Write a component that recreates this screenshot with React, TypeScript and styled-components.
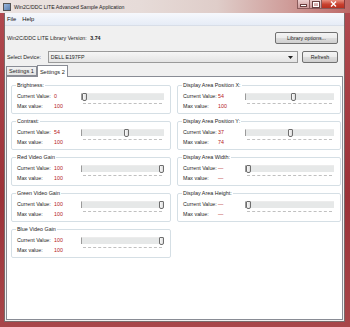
import styled, { createGlobalStyle } from 'styled-components'

const GlobalStyle = createGlobalStyle`
  html, body {
    margin: 0;
    padding: 0;
    background: #ffffff;
  }
  #root {
    width: 350px;
    height: 327px;
    overflow: hidden;
  }
`

type Control = {
  title: string
  current: string
  max: string
  pos: number
}

const leftControls: Control[] = [
  { title: 'Brightness:', current: '0', max: '100', pos: 0 },
  { title: 'Contrast:', current: '54', max: '100', pos: 54 },
  { title: 'Red Video Gain', current: '100', max: '100', pos: 100 },
  { title: 'Green Video Gain', current: '100', max: '100', pos: 100 },
  { title: 'Blue Video Gain', current: '100', max: '100', pos: 100 },
]

const rightControls: Control[] = [
  { title: 'Display Area Position X:', current: '54', max: '100', pos: 54 },
  { title: 'Display Area Position Y:', current: '37', max: '74', pos: 50 },
  { title: 'Display Area Width:', current: '—', max: '—', pos: 0 },
  { title: 'Display Area Height:', current: '—', max: '—', pos: 0 },
]

const GroupBox = ({ control, labelWidth, valueWidth }: { control: Control; labelWidth: number; valueWidth: number }) => (
  <Group>
    <GroupTitle>{control.title}</GroupTitle>
    <GroupGrid $labelWidth={labelWidth} $valueWidth={valueWidth}>
      <FieldLabel>Current Value:</FieldLabel>
      <FieldValue>{control.current}</FieldValue>
      <SliderBox>
        <Track>
          <Thumb style={{ left: `calc(${control.pos}% - ${control.pos * 0.05}px)` }} />
        </Track>
        <Ticks />
      </SliderBox>
      <FieldLabel>Max value:</FieldLabel>
      <FieldValue>{control.max}</FieldValue>
    </GroupGrid>
  </Group>
)

const App = () => {
  return (
    <>
      <GlobalStyle />
      <Window>
        <TitleBar>
          <TitleIcon />
          <TitleText>Win2C/DDC LITE Advanced Sample Application</TitleText>
          <Controls>
            <CaptionButton>
              <MinGlyph />
            </CaptionButton>
            <CaptionButton>
              <MaxGlyph />
            </CaptionButton>
            <CloseButton>
              <svg width="7" height="6" viewBox="0 0 7 6">
                <path d="M1 0.5 L6 5.5 M6 0.5 L1 5.5" stroke="#ffffff" strokeWidth="1.4" />
              </svg>
            </CloseButton>
          </Controls>
        </TitleBar>

        <Client>
          <MenuBar>
            <MenuItem>File</MenuItem>
            <MenuItem>Help</MenuItem>
          </MenuBar>

          <TopArea>
            <TopRow>
              <VersionText>
                Win2C/DDC LITE Library Version: <b>3.74</b>
              </VersionText>
              <PushButton $width={63}>Library options...</PushButton>
            </TopRow>
            <TopRow>
              <VersionText>Select Device:</VersionText>
              <Combo>
                <span>DELL E197FP</span>
                <svg width="5" height="3" viewBox="0 0 5 3">
                  <path d="M0 0 H5 L2.5 3 Z" fill="#222" />
                </svg>
              </Combo>
              <PushButton $width={36}>Refresh</PushButton>
            </TopRow>
          </TopArea>

          <TabArea>
            <TabStrip>
              <Tab>Settings 1</Tab>
              <Tab $active>Settings 2</Tab>
            </TabStrip>
            <TabPanel>
              <Column>
                {leftControls.map((c) => (
                  <GroupBox key={c.title} control={c} labelWidth={37} valueWidth={27} />
                ))}
              </Column>
              <Column>
                {rightControls.map((c) => (
                  <GroupBox key={c.title} control={c} labelWidth={35} valueWidth={27} />
                ))}
              </Column>
            </TabPanel>
          </TabArea>
        </Client>
      </Window>
    </>
  )
}

const Window = styled.div`
  width: 350px;
  height: 327px;
  box-sizing: border-box;
  display: flex;
  flex-flow: column;
  padding: 0 5px 5px 4px;
  background: linear-gradient(180deg, #b24a50 0%, #9c3238 60%, #a8464a 100%);
  font-family: 'Liberation Sans', Arial, sans-serif;
  font-size: 5.3px;
  color: #1e1e1e;
`

const TitleBar = styled.div`
  height: 13px;
  margin: 0 -5px 0 -4px;
  padding-left: 3px;
  display: flex;
  align-items: center;
  gap: 3px;
  background: linear-gradient(90deg, #ebe3e1 0%, #e6dbd8 40%, #dfcdc9 62%, #cf9d9a 82%, #bd6866 100%);
`

const TitleIcon = styled.div`
  width: 6px;
  height: 6px;
  border: 1px solid #555;
  background: linear-gradient(135deg, #9bb9e0, #5a7fae);
`

const TitleText = styled.div`
  flex: 1;
  font-size: 5.2px;
  color: #1a1a1a;
  white-space: nowrap;
`

const Controls = styled.div`
  align-self: flex-start;
  display: flex;
  margin-right: 5px;
`

const CaptionButton = styled.div`
  width: 12px;
  height: 9px;
  box-sizing: border-box;
  border: 1px solid #8a5a5a;
  border-top: none;
  border-right: none;
  background: linear-gradient(180deg, #ecd0d0, #cc9898);
  display: flex;
  align-items: center;
  justify-content: center;
`

const MinGlyph = styled.div`
  width: 5px;
  height: 1px;
  margin-top: 3px;
  background: #ffffff;
  border: 1px solid #6a4040;
`

const MaxGlyph = styled.div`
  width: 4px;
  height: 3px;
  border: 1px solid #ffffff;
  outline: 1px solid #6a4040;
`

const CloseButton = styled(CaptionButton)`
  width: 24px;
  border-right: 1px solid #8a3a3a;
  background: linear-gradient(180deg, #e89080, #c8402e 55%, #b83020);
`

const Client = styled.div`
  flex: 1;
  display: flex;
  flex-flow: column;
  background: #f0f0f0;
  border: 1px solid #7a6a6a;
  border-top: none;
  min-height: 0;
`

const MenuBar = styled.div`
  height: 12px;
  display: flex;
  align-items: center;
  gap: 6px;
  padding-left: 2px;
  background: linear-gradient(180deg, #f6f8fc, #e6ecf6);
  border-bottom: 1px solid #d8dee8;
  font-size: 5.8px;
`

const MenuItem = styled.span`
  color: #111;
`

const TopArea = styled.div`
  display: flex;
  flex-flow: column;
  gap: 7px;
  padding: 6px 6px 0 2px;
`

const TopRow = styled.div`
  height: 12px;
  display: flex;
  align-items: center;
  gap: 4px;

  & > :first-child {
    flex: 0 0 auto;
  }
`

const VersionText = styled.div`
  flex: 1;
  white-space: nowrap;

  b {
    font-weight: bold;
    margin-left: 2px;
  }
`

const PushButton = styled.div<{ $width: number }>`
  width: ${(p) => p.$width}px;
  height: 12px;
  margin-left: auto;
  box-sizing: border-box;
  border: 1px solid #707070;
  border-radius: 2px;
  background: linear-gradient(180deg, #f4f4f4 0%, #ebebeb 48%, #dddddd 52%, #cfcfcf 100%);
  display: flex;
  align-items: center;
  justify-content: center;
  white-space: nowrap;
`

const Combo = styled.div`
  flex: 1;
  height: 12px;
  box-sizing: border-box;
  border: 1px solid #9a9a9a;
  background: linear-gradient(180deg, #f6f6f6, #e4e4e4);
  display: flex;
  align-items: center;
  justify-content: space-between;
  padding: 0 4px 0 2px;
  margin-left: 3px;
`

const TabArea = styled.div`
  flex: 1;
  display: flex;
  flex-flow: column;
  padding: 2px 1px 1px 1px;
  min-height: 0;
`

const TabStrip = styled.div`
  display: flex;
  align-items: flex-end;
  height: 11px;
  padding-left: 0;
`

const Tab = styled.div<{ $active?: boolean }>`
  height: ${(p) => (p.$active ? 12 : 10)}px;
  margin-bottom: ${(p) => (p.$active ? -1 : 0)}px;
  box-sizing: border-box;
  padding: 0 2px;
  display: flex;
  align-items: center;
  border: 1px solid #898c95;
  border-bottom: ${(p) => (p.$active ? 'none' : '1px solid #898c95')};
  background: ${(p) => (p.$active ? '#ffffff' : 'linear-gradient(180deg, #f2f2f2, #e3e3e3)')};
  position: relative;
  z-index: ${(p) => (p.$active ? 1 : 0)};
  font-size: 5.6px;
`

const TabPanel = styled.div`
  flex: 1;
  background: #ffffff;
  border: 1px solid #898c95;
  display: grid;
  grid-template-columns: 160px 164px;
  column-gap: 6px;
  align-content: start;
  padding: 5px 0 0 4px;
`

const Column = styled.div`
  display: flex;
  flex-flow: column;
  gap: 4px;
`

const Group = styled.fieldset`
  margin: 0;
  height: 32px;
  box-sizing: border-box;
  padding: 0 6px 2px 5px;
  border: 1px solid #d5dfe5;
  border-radius: 2px;
  min-width: 0;
`

const GroupTitle = styled.legend`
  padding: 0 1px;
  margin-left: -1px;
  font-size: 5.4px;
  line-height: 6px;
  color: #1e1e1e;
`

const GroupGrid = styled.div<{ $labelWidth: number; $valueWidth: number }>`
  display: grid;
  grid-template-columns: ${(p) => p.$labelWidth}px ${(p) => p.$valueWidth}px 1fr;
  grid-template-rows: 10px 10px;
  align-items: center;
  padding-top: 3px;
`

const FieldLabel = styled.div`
  white-space: nowrap;
`

const FieldValue = styled.div`
  color: #b42020;
`

const SliderBox = styled.div`
  grid-row: 1 / span 2;
  grid-column: 3;
  align-self: stretch;
  display: flex;
  flex-flow: column;
  padding-top: 2px;
  gap: 3px;
`

const Track = styled.div`
  position: relative;
  height: 7px;
  box-sizing: border-box;
  background: #e6e8e8;
  border-left: 1px solid #9a9a9a;
  border-top: 1px solid #ececec;
`

const Thumb = styled.div`
  position: absolute;
  top: -1px;
  width: 5px;
  height: 8px;
  box-sizing: border-box;
  border: 1px solid #6e6e6e;
  border-radius: 1px 1px 2px 2px;
  background: linear-gradient(90deg, #fafafa, #dcdcdc);
`

const Ticks = styled.div`
  height: 0;
  margin: 0 2px;
  border-top: 1px dashed #c0c0c0;
`

export default App
